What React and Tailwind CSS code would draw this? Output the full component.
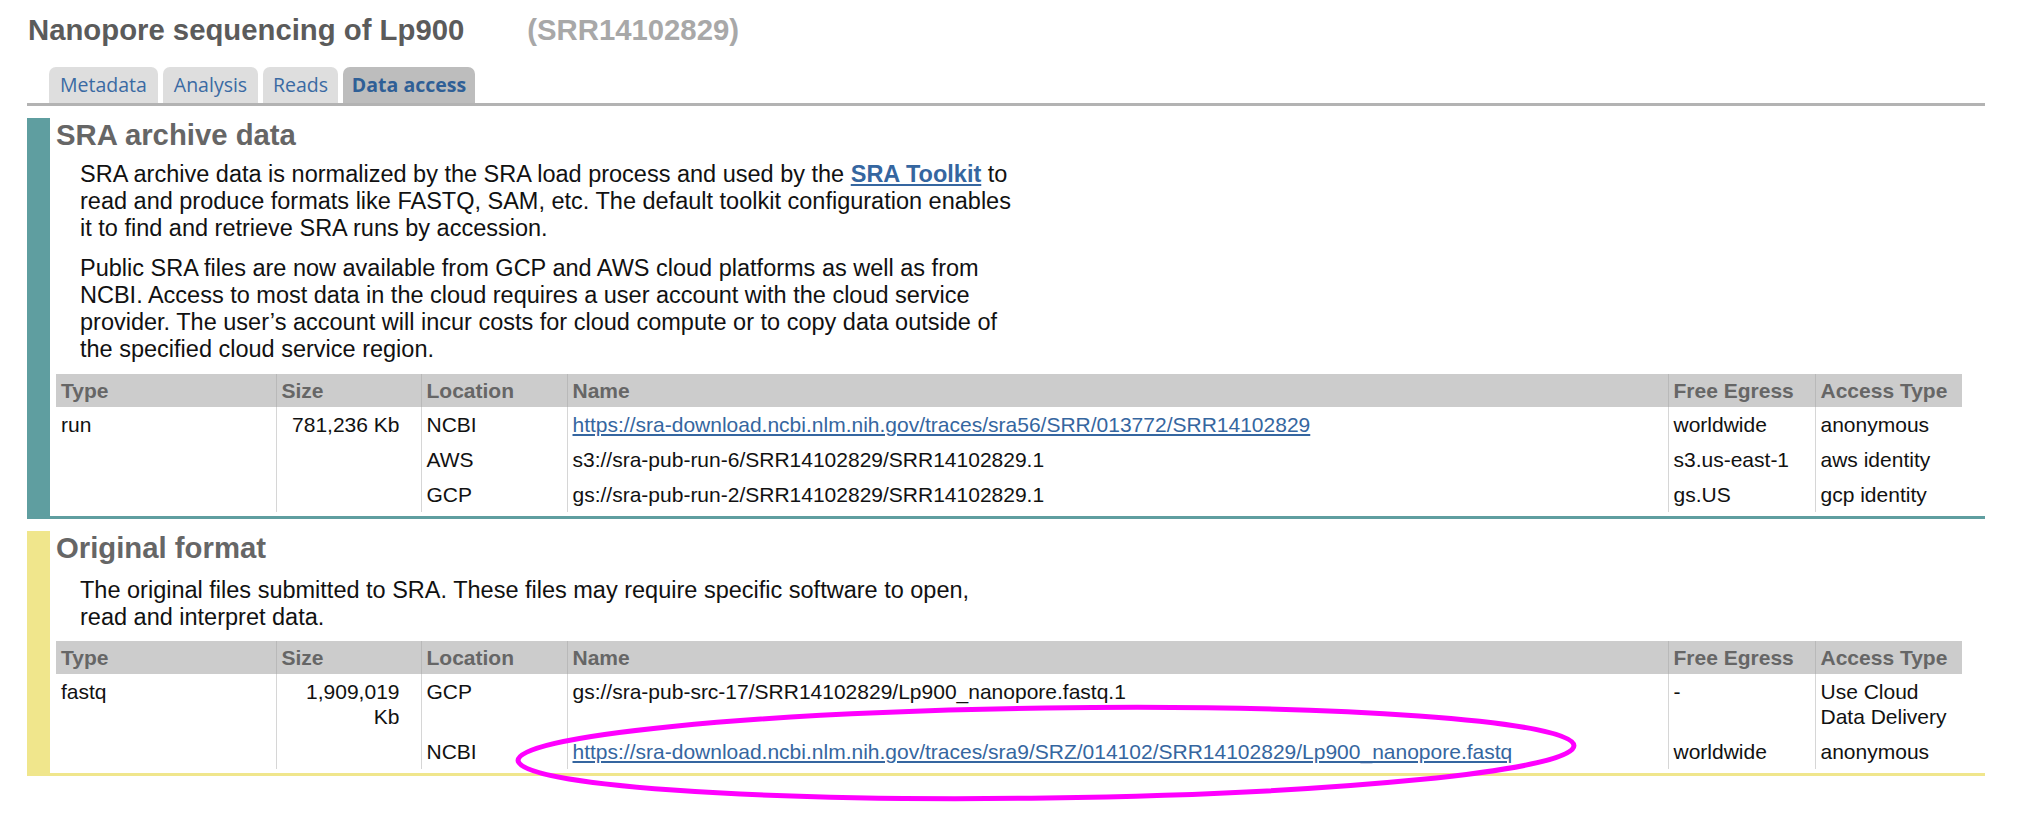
import React from "react";

const BODY_FONT = "font-['Liberation_Sans',Arial,sans-serif]";
const LINK = "text-[#3566a0] underline";

const TABS = [
  { label: "Metadata", width: "w-[109px]" },
  { label: "Analysis", width: "w-[95px]" },
  { label: "Reads", width: "w-[75px]" },
  { label: "Data access", width: "w-[132px]", active: true },
];

const ARCHIVE_ROWS = [
  {
    type: "run",
    size: "781,236 Kb",
    location: "NCBI",
    name: "https://sra-download.ncbi.nlm.nih.gov/traces/sra56/SRR/013772/SRR14102829",
    link: true,
    egress: "worldwide",
    access: "anonymous",
  },
  {
    location: "AWS",
    name: "s3://sra-pub-run-6/SRR14102829/SRR14102829.1",
    egress: "s3.us-east-1",
    access: "aws identity",
  },
  {
    location: "GCP",
    name: "gs://sra-pub-run-2/SRR14102829/SRR14102829.1",
    egress: "gs.US",
    access: "gcp identity",
  },
];

const ORIGINAL_ROWS = [
  {
    type: "fastq",
    size: "1,909,019 Kb",
    location: "GCP",
    name: "gs://sra-pub-src-17/SRR14102829/Lp900_nanopore.fastq.1",
    egress: "-",
    access: "Use Cloud Data Delivery",
  },
  {
    location: "NCBI",
    name: "https://sra-download.ncbi.nlm.nih.gov/traces/sra9/SRZ/014102/SRR14102829/Lp900_nanopore.fastq",
    link: true,
    egress: "worldwide",
    access: "anonymous",
  },
];

function DataTable({ rows, className }) {
  const th = "px-[5px] py-[4px] text-left font-bold border-l border-[#b9b9b9]";
  const td = "px-[5px] py-[5px] align-top border-l border-[#d6d6d6]";
  return (
    <table
      className={`w-[1906px] table-fixed border-collapse text-[21px] leading-[25px] ${className}`}
    >
      <colgroup>
        <col className="w-[220px]" />
        <col className="w-[145px]" />
        <col className="w-[146px]" />
        <col className="w-[1101px]" />
        <col className="w-[147px]" />
        <col className="w-[147px]" />
      </colgroup>
      <thead>
        <tr className="bg-[#cccccc] text-[#666666]">
          <th className="px-[5px] py-[4px] text-left font-bold">Type</th>
          <th className={th}>Size</th>
          <th className={th}>Location</th>
          <th className={th}>Name</th>
          <th className={th}>Free Egress</th>
          <th className={th}>Access Type</th>
        </tr>
      </thead>
      <tbody className="text-[#111]">
        {rows.map((r, i) => (
          <tr key={i}>
            <td className="px-[5px] py-[5px] align-top">{r.type}</td>
            <td className="pl-[5px] pr-[21px] py-[5px] align-top text-right border-l border-[#d6d6d6]">
              {r.size}
            </td>
            <td className={td}>{r.location}</td>
            <td className={td}>
              {r.link ? <a className={LINK}>{r.name}</a> : r.name}
            </td>
            <td className={td}>{r.egress}</td>
            <td className={td}>{r.access}</td>
          </tr>
        ))}
      </tbody>
    </table>
  );
}

function Section({ color, title, children }) {
  return (
    <section className={`border-l-[23px] border-b-[3px] ${color} pl-[6px] pr-[21px] pb-[4px]`}>
      <h2 className="text-[29.3px] leading-[33px] font-bold text-[#666666]">{title}</h2>
      {children}
    </section>
  );
}

export default function App() {
  return (
    <div
      className={`relative min-h-[823px] overflow-hidden bg-white pl-[27px] pr-[36px] pt-[13px] ${BODY_FONT}`}
    >
      <h1 className="text-[29.3px] leading-[34px] font-bold text-[#5b5b5b] pl-px">
        Nanopore sequencing of Lp900
        <span className="ml-[63px] text-[#a8a8a8]">(SRR14102829)</span>
      </h1>

      <div className="mt-[20px] flex gap-[5px] pl-[22px] border-b-[3px] border-[#b3b3b3]">
        {TABS.map((t) => (
          <div
            key={t.label}
            className={`${t.width} h-[36px] rounded-t-[7px] flex items-center justify-center font-['Open_Sans',sans-serif] text-[19.5px] ${
              t.active ? "bg-[#bdbdbd] font-bold text-[#2f5f96]" : "bg-[#dedede] text-[#3a6aa3]"
            }`}
          >
            {t.label}
          </div>
        ))}
      </div>

      <div className="mt-[12px]">
        <Section color="border-[#5f9ea0]" title="SRA archive data">
          <div className="pl-[24px] text-[23.5px] leading-[27px] text-[#111]">
            <p className="mt-[10px] w-[947px]">
              SRA archive data is normalized by the SRA load process and used by the{" "}
              <a className={`${LINK} font-bold`}>SRA Toolkit</a> to read and produce formats like
              FASTQ, SAM, etc. The default toolkit configuration enables it to find and retrieve SRA
              runs by accession.
            </p>
            <p className="mt-[13px] w-[947px]">
              Public SRA files are now available from GCP and AWS cloud platforms as well as from
              NCBI. Access to most data in the cloud requires a user account with the cloud service
              provider. The user’s account will incur costs for cloud compute or to copy data
              outside of the specified cloud service region.
            </p>
          </div>
          <DataTable rows={ARCHIVE_ROWS} className="mt-[11px]" />
        </Section>

        <div className="mt-[12px]">
          <Section color="border-[#f0e68c]" title="Original format">
            <div className="pl-[24px] text-[23.5px] leading-[27px] text-[#111]">
              <p className="mt-[13px] w-[915px]">
                The original files submitted to SRA. These files may require specific software to
                open, read and interpret data.
              </p>
            </div>
            <DataTable rows={ORIGINAL_ROWS} className="mt-[10px]" />
          </Section>
        </div>
      </div>

      {/* hand-drawn highlight around the NCBI download link */}
      <svg
        className="pointer-events-none absolute left-0 top-0"
        width="2021"
        height="823"
        viewBox="0 0 2021 823"
      >
        <ellipse
          cx="1046"
          cy="753"
          rx="528"
          ry="45"
          fill="none"
          stroke="#ff00ff"
          strokeWidth="5"
          transform="rotate(-0.8 1046 753)"
        />
      </svg>
    </div>
  );
}
